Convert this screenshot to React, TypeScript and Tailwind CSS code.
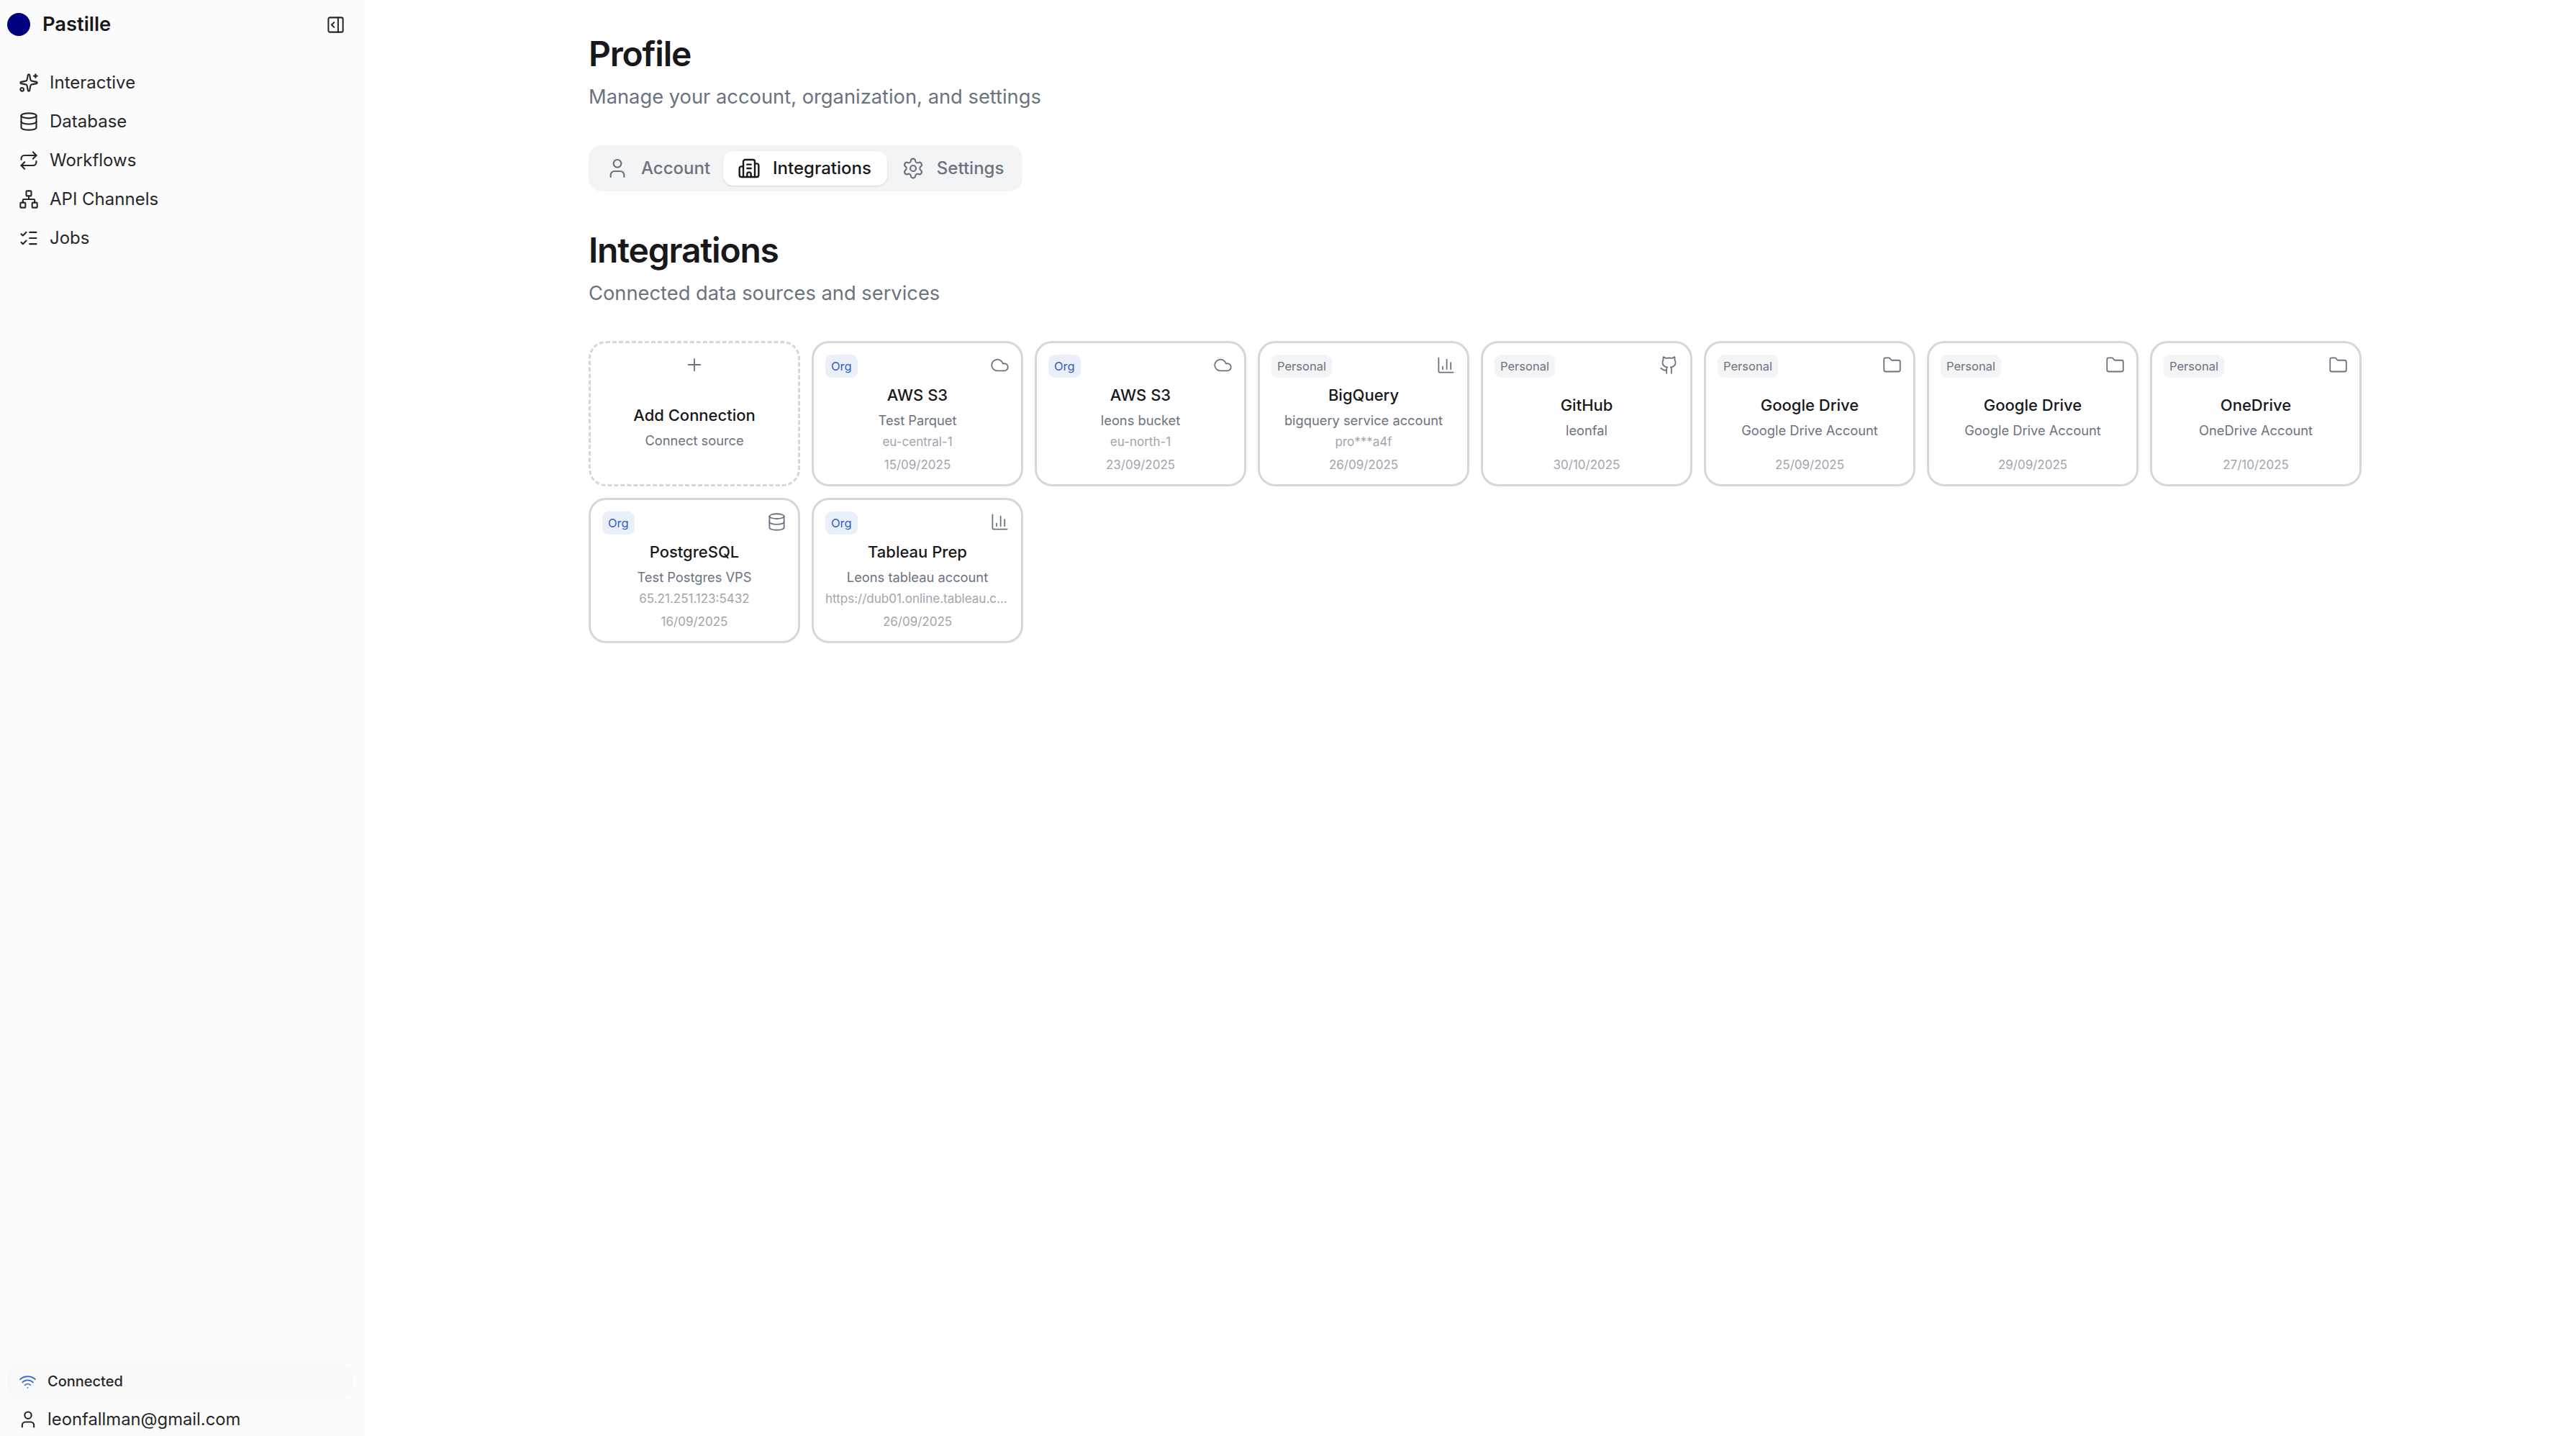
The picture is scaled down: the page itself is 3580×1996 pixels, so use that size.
import { Sparkles, Database, Repeat, Network, ListChecks, PanelRightOpen, User, Building2, Settings, Cloud, ChartColumn, Github, Folder, Plus, Wifi } from "lucide-react";
import type { ComponentType } from "react";

const nav = [
  { label: "Interactive", Icon: Sparkles },
  { label: "Database", Icon: Database },
  { label: "Workflows", Icon: Repeat },
  { label: "API Channels", Icon: Network },
  { label: "Jobs", Icon: ListChecks },
];

type Conn = { scope: "Org" | "Personal"; Icon: ComponentType<any>; title: string; sub: string; detail?: string; date: string };

const conns: Conn[] = [
  { scope: "Org", Icon: Cloud, title: "AWS S3", sub: "Test Parquet", detail: "eu-central-1", date: "15/09/2025" },
  { scope: "Org", Icon: Cloud, title: "AWS S3", sub: "leons bucket", detail: "eu-north-1", date: "23/09/2025" },
  { scope: "Personal", Icon: ChartColumn, title: "BigQuery", sub: "bigquery service account", detail: "pro***a4f", date: "26/09/2025" },
  { scope: "Personal", Icon: Github, title: "GitHub", sub: "leonfal", date: "30/10/2025" },
  { scope: "Personal", Icon: Folder, title: "Google Drive", sub: "Google Drive Account", date: "25/09/2025" },
  { scope: "Personal", Icon: Folder, title: "Google Drive", sub: "Google Drive Account", date: "29/09/2025" },
  { scope: "Personal", Icon: Folder, title: "OneDrive", sub: "OneDrive Account", date: "27/10/2025" },
  { scope: "Org", Icon: Database, title: "PostgreSQL", sub: "Test Postgres VPS", detail: "65.21.251.123:5432", date: "16/09/2025" },
  { scope: "Org", Icon: ChartColumn, title: "Tableau Prep", sub: "Leons tableau account", detail: "https://dub01.online.tableau.com/site/leons", date: "26/09/2025" },
];

function Card({ c }: { c: Conn }) {
  return (
    <div className="flex h-[202px] min-w-0 flex-col rounded-[24px] border-[3px] border-[#d6d6dd] bg-white px-[16px] pt-[16px] pb-[17px] text-center">
      <div className="flex items-start justify-between">
        <span className={`flex h-[32px] items-center rounded-[9px] px-[8px] text-[16.5px] font-normal ${c.scope === "Org" ? "bg-[#eaeffa] text-[#2f5fc4]" : "bg-[#f3f4f6] text-[#6b7280]"}`}>{c.scope}</span>
        <c.Icon className="mt-[1px] h-[27px] w-[27px] text-[#6b7280]" strokeWidth={1.6} />
      </div>
      <div className="flex min-w-0 flex-1 flex-col items-center justify-center">
        <div className="text-[22px] leading-[28px] font-medium text-[#18181b]">{c.title}</div>
        <div className="mt-[7px] w-full truncate text-[18.3px] leading-[28px] text-[#6b7280]">{c.sub}</div>
        {c.detail && <div className="mt-[3px] w-full truncate text-[17px] leading-[26px] text-[#a1a5ad]">{c.detail}</div>}
      </div>
      <div className="text-[17px] leading-[20px] text-[#a1a5ad]">{c.date}</div>
    </div>
  );
}

export default function App() {
  return (
    <div className="flex h-[1996px] w-[3580px] overflow-hidden bg-white font-['Inter',sans-serif] text-[#18181b]">
      <aside className="flex w-[506px] shrink-0 flex-col bg-[#fcfcfc] px-[10px]">
        <div className="flex h-[68px] items-center">
          <span className="h-[32px] w-[32px] rounded-full bg-[#000080]" />
          <span className="ml-[17px] text-[27.3px] font-semibold">Pastille</span>
          <PanelRightOpen className="ml-auto mr-[16px] h-[27px] w-[27px] text-[#27272a]" strokeWidth={1.8} />
        </div>
        <nav className="mt-[20px] flex flex-col">
          {nav.map(({ label, Icon }) => (
            <div key={label} className="flex h-[54px] items-center pl-[16px]">
              <Icon className="h-[28px] w-[28px] text-[#27272a]" strokeWidth={1.8} />
              <span className="ml-[15px] text-[24px] text-[#27272a]">{label}</span>
            </div>
          ))}
        </nav>
        <div className="mt-auto mr-[6px] flex h-[48px] items-center rounded-[16px] bg-[#f9f9f9] pl-[16px]">
          <Wifi className="h-[25px] w-[25px] text-[#3b6fd4]" strokeWidth={1.8} />
          <span className="ml-[15px] text-[20px] font-medium text-[#27272a]">Connected</span>
        </div>
        <div className="flex h-[52px] items-center pt-[6px] pl-[15px]">
          <User className="h-[28px] w-[28px] text-[#27272a]" strokeWidth={1.8} />
          <span className="ml-[13px] text-[23.8px] text-[#27272a]">leonfallman@gmail.com</span>
        </div>
      </aside>
      <main className="min-w-0 flex-1 pl-[312px]">
        <h1 className="mt-[45px] text-[48px] leading-[60px] font-semibold tracking-tight">Profile</h1>
        <p className="mt-[15px] text-[27.3px] leading-[30px] text-[#6b7280]">Manage your account, organization, and settings</p>
        <div className="mt-[52px] inline-flex h-[64px] items-center rounded-[18px] bg-[#f3f4f6] p-[8px]">
          <div className="flex h-[48px] items-center gap-[17px] rounded-[14px] pr-[18px] pl-[16px] text-[24px] font-medium text-[#6b7280]">
            <User className="h-[32px] w-[32px]" strokeWidth={1.6} />Account
          </div>
          <div className="flex h-[48px] items-center gap-[17px] rounded-[14px] bg-white pr-[22px] pl-[20px] text-[24px] font-medium text-[#18181b] shadow-sm">
            <Building2 className="h-[32px] w-[32px]" strokeWidth={1.8} />Integrations
          </div>
          <div className="flex h-[48px] items-center gap-[17px] rounded-[14px] pr-[18px] pl-[20px] text-[24px] font-medium text-[#6b7280]">
            <Settings className="h-[32px] w-[32px]" strokeWidth={1.6} />Settings
          </div>
        </div>
        <h2 className="mt-[52px] text-[48px] leading-[60px] font-semibold tracking-tight">Integrations</h2>
        <p className="mt-[15px] text-[27.3px] leading-[30px] text-[#6b7280]">Connected data sources and services</p>
        <div className="mt-[51px] grid w-[2464px] grid-cols-8 gap-[16px]">
          <div className="flex h-[202px] min-w-0 flex-col items-center rounded-[24px] border-[3px] border-dashed border-[#d6d6dd] bg-white pt-[16px] text-center">
            <Plus className="h-[28px] w-[28px] text-[#6b7280]" strokeWidth={1.6} />
            <div className="mt-[42px] text-[22px] leading-[28px] font-medium">Add Connection</div>
            <div className="mt-[7px] text-[18.3px] leading-[28px] text-[#6b7280]">Connect source</div>
          </div>
          {conns.map((c, i) => <Card key={i} c={c} />)}
        </div>
      </main>
    </div>
  );
}
